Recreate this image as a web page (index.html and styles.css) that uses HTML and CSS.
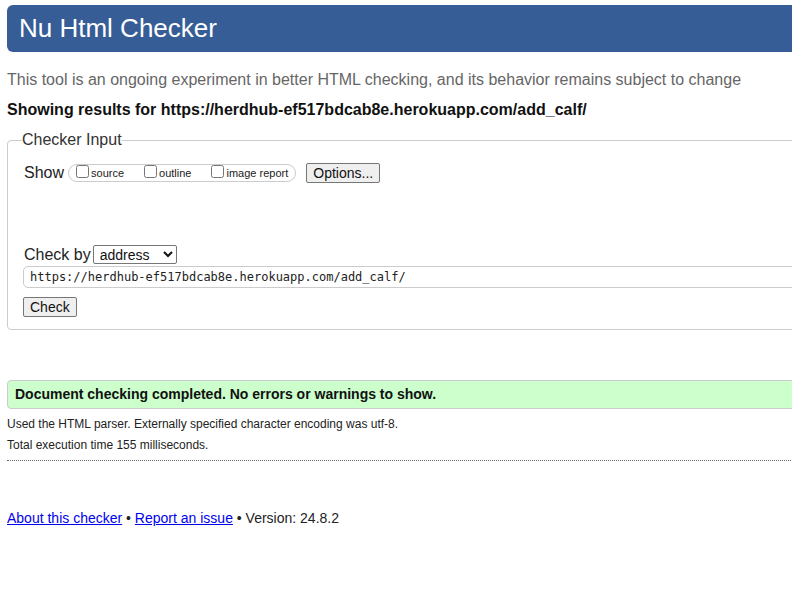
FILE: index.html
```html
<!DOCTYPE html>
<html>
<head>
<meta charset="utf-8">
<title>Nu Html Checker</title>
<link rel="stylesheet" href="styles.css">
</head>
<body>
<div class="page">
  <h1 class="banner">Nu Html Checker</h1>
  <p class="intro">This tool is an ongoing experiment in better HTML checking, and its behavior remains subject to change</p>
  <p class="results-for">Showing results for https://herdhub-ef517bdcab8e.herokuapp.com/add_calf/</p>
  <fieldset class="checker">
    <legend class="legend">Checker Input</legend>
    <div class="show-row">
      <span class="label">Show</span>
      <span class="group">
        <label class="opt"><input type="checkbox" class="cb">source</label>
        <label class="opt"><input type="checkbox" class="cb">outline</label>
        <label class="opt last"><input type="checkbox" class="cb">image report</label>
      </span>
      <button class="btn btn-options">Options...</button>
    </div>
    <div class="by-row">
      <span class="label">Check by</span>
      <select class="select"><option>address</option></select>
    </div>
    <input class="url" type="text" value="https://herdhub-ef517bdcab8e.herokuapp.com/add_calf/">
    <div class="check-row"><button class="btn btn-check">Check</button></div>
  </fieldset>
  <div class="success">Document checking completed. No errors or warnings to show.</div>
  <p class="detail first">Used the HTML parser. Externally specified character encoding was utf-8.</p>
  <p class="detail">Total execution time 155 milliseconds.</p>
  <hr class="rule">
  <p class="footer"><a href="#">About this checker</a> • <a href="#">Report an issue</a> • Version: 24.8.2</p>
</div>
</body>
</html>
```

FILE: styles.css
```css
html, body {
  margin: 0;
  padding: 0;
  overflow: hidden;
  background: #fff;
}
body {
  font-family: "Liberation Sans", Arial, sans-serif;
  color: #222;
}
.page {
  width: 1000px;
  padding: 5px 0 0 7px;
}
.banner {
  margin: 0;
  height: 47px;
  line-height: 46px;
  background: #365d95;
  color: #fff;
  font-size: 26px;
  font-weight: normal;
  padding-left: 12px;
  border-radius: 6px 0 0 6px;
}
.intro {
  margin: 19px 0 0 0;
  font-size: 16px;
  line-height: 18px;
  color: #666;
}
.results-for {
  margin: 12px 0 0 0;
  font-size: 16px;
  line-height: 18px;
  font-weight: bold;
  color: #111;
}
.checker {
  margin: 12px 0 0 0;
  padding: 14px 16px 12px 16px;
  border: 1px solid #ccc;
  border-radius: 4px 0 0 4px;
  min-width: 0;
}
.legend {
  padding: 0;
  margin-left: -2px;
  font-size: 16px;
  line-height: 18px;
  color: #333;
}
.label {
  font-size: 16px;
  line-height: 20px;
  color: #222;
}
.show-row {
  display: flex;
  align-items: center;
  height: 20px;
}
.group {
  display: inline-flex;
  align-items: center;
  margin-left: 4px;
  height: 16px;
  padding: 0 7px 0 3px;
  border: 1px solid #ccc;
  border-radius: 9px;
}
.opt {
  display: inline-flex;
  align-items: center;
  font-size: 11px;
  line-height: 16px;
  margin-right: 16px;
  color: #222;
}
.opt.last {
  margin-right: 0;
}
.cb {
  width: 13px;
  height: 13px;
  margin: 0 2px 0 4px;
  position: relative;
  top: -2px;
}
.btn {
  font-family: "Liberation Sans", Arial, sans-serif;
  font-size: 14px;
  height: 20px;
  line-height: 16px;
  padding: 0 6px;
  border: 1px solid #767676;
  border-radius: 2px;
  background: #efefef;
  color: #111;
}
.btn-options {
  margin-left: 10px;
}
.by-row {
  display: flex;
  align-items: center;
  gap: 2px;
  margin-top: 62px;
  height: 19px;
}
.select {
  font-family: "Liberation Sans", Arial, sans-serif;
  font-size: 14px;
  width: 84px;
  height: 19px;
  padding: 0 0 0 2px;
  border: 1px solid #767676;
  border-radius: 2px;
  background: #fff;
  color: #111;
}
.url {
  display: block;
  box-sizing: border-box;
  margin: 2px 0 0 -1px;
  width: 980px;
  height: 22px;
  padding: 0 0 0 6px;
  border: 1px solid #ccc;
  border-radius: 5px 0 0 5px;
  font-family: "DejaVu Sans Mono", Consolas, monospace;
  font-size: 12px;
  color: #222;
  outline: none;
}
.check-row {
  margin: 9px 0 0 -1px;
  height: 20px;
  display: flex;
}
.success {
  margin-top: 50px;
  height: 27px;
  line-height: 27px;
  padding-left: 7px;
  background: #ccffcc;
  border: 1px solid #ccc;
  border-radius: 4px 0 0 4px;
  font-size: 14px;
  font-weight: bold;
  color: #111;
}
.detail {
  margin: 7px 0 0 0;
  font-size: 12px;
  line-height: 14px;
  color: #222;
}
.detail.first {
  margin-top: 8px;
}
.rule {
  margin: 8px 0 0 0;
  width: 784px;
  border: 0;
  border-top: 1px dotted #666;
  height: 0;
}
.footer {
  margin: 49px 0 0 0;
  font-size: 14px;
  line-height: 16px;
  color: #222;
}
.footer a {
  color: #0000ee;
}
```
